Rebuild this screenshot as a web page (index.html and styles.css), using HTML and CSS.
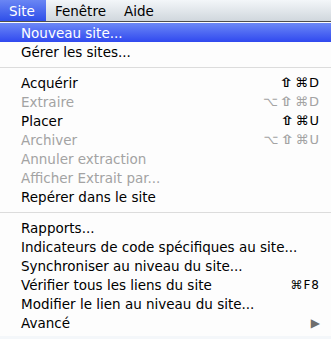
FILE: index.html
```html
<!DOCTYPE html>
<html lang="fr">
<head>
    <meta charset="UTF-8">
    <title>Menu Site</title>
    <link rel="stylesheet" href="styles.css">
</head>
<body>
    <div class="menubar">
        <span class="title active">Site</span>
        <span class="title">Fenêtre</span>
        <span class="title">Aide</span>
    </div>
    <ul class="menu">
        <li class="item selected"><span>Nouveau site...</span></li>
        <li class="item"><span>Gérer les sites...</span></li>
        <li class="sep"></li>
        <li class="item"><span>Acquérir</span><span class="key"><span class="shift">⇧</span>⌘D</span></li>
        <li class="item off"><span>Extraire</span><span class="key">⌥<span class="shift">⇧</span>⌘D</span></li>
        <li class="item"><span>Placer</span><span class="key"><span class="shift">⇧</span>⌘U</span></li>
        <li class="item off"><span>Archiver</span><span class="key">⌥<span class="shift">⇧</span>⌘U</span></li>
        <li class="item off"><span>Annuler extraction</span></li>
        <li class="item off"><span>Afficher Extrait par...</span></li>
        <li class="item"><span>Repérer dans le site</span></li>
        <li class="sep"></li>
        <li class="item"><span>Rapports...</span></li>
        <li class="item"><span>Indicateurs de code spécifiques au site...</span></li>
        <li class="item"><span>Synchroniser au niveau du site...</span></li>
        <li class="item"><span>Vérifier tous les liens du site</span><span class="key small">⌘F8</span></li>
        <li class="item"><span>Modifier le lien au niveau du site...</span></li>
        <li class="item"><span>Avancé</span><span class="arrow">▶</span></li>
    </ul>
</body>
</html>
```

FILE: styles.css
```css
body {
    margin: 0;
    background: #f4f7fa;
    font-family: "DejaVu Sans", sans-serif;
    font-size: 13.5px;
    color: #000;
}
.menubar {
    display: flex;
    height: 21px;
    border-bottom: 1px solid #4e4e4e;
    background: linear-gradient(#f3f6f9, #d0d7dd);
}
.title {
    display: flex;
    align-items: center;
    padding: 0 9px;
    height: 21px;
}
.title.active {
    padding-right: 11px;
    color: #fff;
    background: linear-gradient(#6a86f4, #2f4fe9);
}
.menu {
    list-style: none;
    margin: 0;
    padding: 1px 0 4px;
    background: #fdfdfd;
}
.item {
    display: flex;
    justify-content: space-between;
    align-items: center;
    height: 19px;
    padding: 0 11px 0 21px;
}
.item.selected {
    color: #fff;
    background: linear-gradient(#6c88f6, #3049ef);
}
.item.off {
    color: #a3a3a3;
}
.key {
    font-size: 13px;
    letter-spacing: 1px;
}
.shift {
    display: inline-block;
    transform: scaleX(1.4);
    margin: 0 2px;
    font-weight: bold;
}
.key.small {
    font-size: 12px;
}
.arrow {
    font-size: 12px;
    color: #6e6e6e;
}
.sep {
    height: 1px;
    margin: 6px 0 5px;
    background: #dcdcdc;
}
```
